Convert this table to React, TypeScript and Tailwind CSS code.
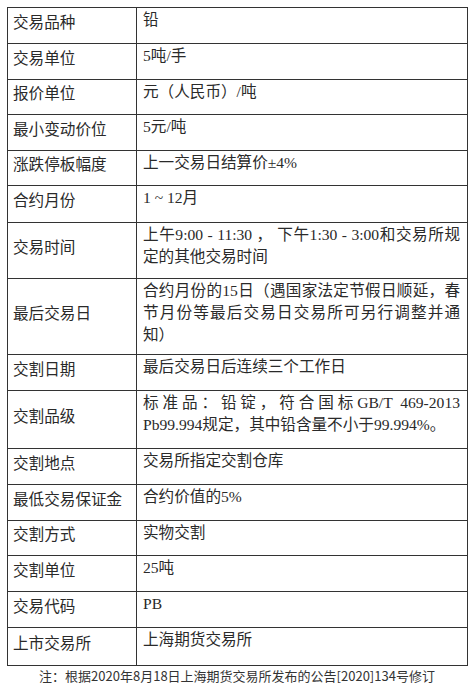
type Row = { label: string; lines: string[]; h: string };

const rows: Row[] = [
  { label: "交易品种", lines: ["铅"], h: "h-[36px]" },
  { label: "交易单位", lines: ["5吨/手"], h: "h-[36px]" },
  { label: "报价单位", lines: ["元（人民币）/吨"], h: "h-[35px]" },
  { label: "最小变动价位", lines: ["5元/吨"], h: "h-[36px]" },
  { label: "涨跌停板幅度", lines: ["上一交易日结算价±4%"], h: "h-[35px]" },
  { label: "合约月份", lines: ["1 ~ 12月"], h: "h-[37px]" },
  {
    label: "交易时间",
    lines: ["上午9:00 - 11:30 ， 下午1:30 - 3:00和交易所规", "定的其他交易时间"],
    h: "h-[56px]",
  },
  {
    label: "最后交易日",
    lines: ["合约月份的15日（遇国家法定节假日顺延，春", "节月份等最后交易日交易所可另行调整并通", "知）"],
    h: "h-[76px]",
  },
  { label: "交割日期", lines: ["最后交易日后连续三个工作日"], h: "h-[36px]" },
  {
    label: "交割品级",
    lines: ["标准品：铅锭，符合国标GB/T 469-2013", "Pb99.994规定，其中铅含量不小于99.994%。"],
    h: "h-[58px]",
  },
  { label: "交割地点", lines: ["交易所指定交割仓库"], h: "h-[36px]" },
  { label: "最低交易保证金", lines: ["合约价值的5%"], h: "h-[36px]" },
  { label: "交割方式", lines: ["实物交割"], h: "h-[35px]" },
  { label: "交割单位", lines: ["25吨"], h: "h-[36px]" },
  { label: "交易代码", lines: ["PB"], h: "h-[36px]" },
  { label: "上市交易所", lines: ["上海期货交易所"], h: "h-[37px]" },
];

export default function App() {
  return (
    <div className="w-[474px] h-[688px] bg-white pt-[7px] pl-[7px] text-[#2a2a2a] font-['Liberation_Serif','Noto_Sans_CJK_SC',serif]">
      <div className="w-[461px] border border-[#333]">
        {rows.map((r, i) => (
          <div
            key={r.label}
            className={`flex ${r.h} ${i < rows.length - 1 ? "border-b border-[#333]" : ""}`}
          >
            <div className="w-[129px] shrink-0 border-r border-[#333] flex items-center pl-[5px] pb-[10px] text-[15.6px] leading-[22px] font-['Noto_Sans_CJK_SC',sans-serif]">
              {r.label}
            </div>
            <div className="flex-1 min-w-0 pl-[6px] pr-[7px] pt-[1px] text-[15.6px] leading-[22px]">
              {r.lines.map((l, j) => (
                <div
                  key={j}
                  className={
                    j < r.lines.length - 1
                      ? "whitespace-nowrap text-justify [text-align-last:justify]"
                      : "whitespace-nowrap"
                  }
                >
                  {l}
                </div>
              ))}
            </div>
          </div>
        ))}
      </div>
      <div className="pr-[7px] pt-[1px] text-center text-[13px] leading-[18px] text-[#333] font-['Noto_Sans_CJK_SC',sans-serif]">
        注：根据2020年8月18日上海期货交易所发布的公告[2020]134号修订
      </div>
    </div>
  );
}
